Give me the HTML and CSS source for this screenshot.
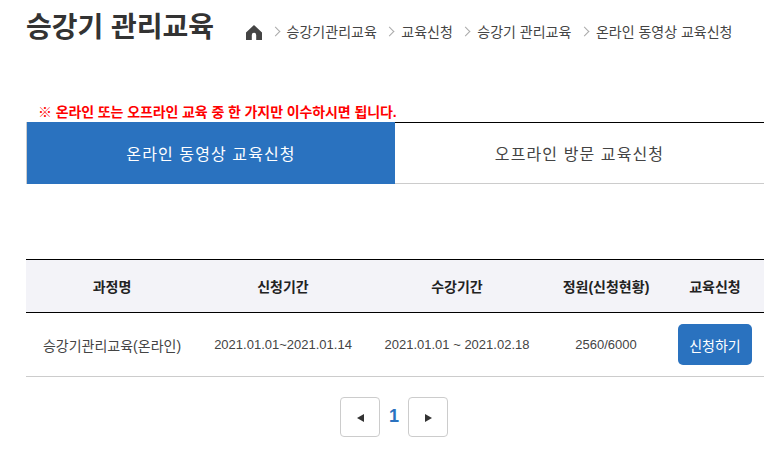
FILE: index.html
```html
<!DOCTYPE html>
<html lang="ko">
<head>
    <meta charset="UTF-8">
    <meta name="viewport" content="width=device-width, initial-scale=1.0">
    <title>온라인 동영상 교육신청</title>
    <link rel="stylesheet" href="styles.css">
</head>
<body>

<div class="page-head">
    <h1 class="page-title">승강기 관리교육</h1>
    <div class="crumbs">
        <svg class="home-icon" viewBox="0 0 16 15" width="16" height="15">
            <path d="M8 0 L16 7.6 V15 H10.2 V10 A2.2 2.2 0 0 0 5.8 10 V15 H0 V7.6 Z" fill="#444"/>
        </svg>
        <span class="crumb">승강기관리교육</span>
        <span class="crumb">교육신청</span>
        <span class="crumb">승강기 관리교육</span>
        <span class="crumb">온라인 동영상 교육신청</span>
    </div>
</div>

<p class="notice">※ 온라인 또는 오프라인 교육 중 한 가지만 이수하시면 됩니다.</p>

<div class="tabs">
    <a class="tab active">온라인 동영상 교육신청</a>
    <a class="tab">오프라인 방문 교육신청</a>
</div>

<table class="course-table">
    <thead>
        <tr>
            <th class="col-name">과정명</th>
            <th class="col-apply">신청기간</th>
            <th class="col-study">수강기간</th>
            <th class="col-seats">정원(신청현황)</th>
            <th>교육신청</th>
        </tr>
    </thead>
    <tbody>
        <tr>
            <td class="course-name">승강기관리교육(온라인)</td>
            <td>2021.01.01~2021.01.14</td>
            <td>2021.01.01 ~ 2021.02.18</td>
            <td>2560/6000</td>
            <td><button class="apply-btn">신청하기</button></td>
        </tr>
    </tbody>
</table>

<div class="pager">
    <a class="page-btn"><span class="arrow-left"></span></a>
    <span class="page-num">1</span>
    <a class="page-btn"><span class="arrow-right"></span></a>
</div>

</body>
</html>
```

FILE: styles.css
```css
* { box-sizing: border-box; }
body {
    font-family: "Liberation Sans", "Noto Sans CJK KR", sans-serif;
    margin: 0;
    padding: 0 13px 0 26px;
    color: #333;
    background: #fff;
}

/* title + breadcrumb */
.page-head {
    display: flex;
    align-items: flex-start;
    height: 104px;
    padding-top: 10px;
}
.page-title {
    margin: 0;
    font-size: 28px;
    line-height: 36px;
    font-weight: 700;
    color: #333;
    white-space: nowrap;
}
.crumbs {
    display: flex;
    align-items: center;
    margin-left: 32px;
    height: 20px;
    margin-top: 11px;
    font-size: 14px;
    color: #444;
    white-space: nowrap;
}
.home-icon { margin-top: 3px; }
.crumb {
    display: flex;
    align-items: center;
    margin-left: 9.5px;
}
.crumb::before {
    content: "";
    width: 6px;
    height: 6px;
    margin-right: 8px;
    border-top: 1.5px solid #aaa;
    border-right: 1.5px solid #aaa;
    transform: rotate(45deg);
}

.notice {
    margin: 0 0 0 12px;
    height: 18px;
    font-size: 14px;
    line-height: 16px;
    font-weight: 700;
    letter-spacing: -0.1px;
    color: #f00;
    white-space: nowrap;
}

/* tabs */
.tabs {
    display: flex;
    height: 62px;
    border-top: 1px solid #000;
    border-bottom: 1px solid #ccc;
}
.tab {
    flex: 0 0 369px;
    display: flex;
    align-items: center;
    justify-content: center;
    font-size: 16px;
    letter-spacing: 1.1px;
    color: #444;
}
.tab + .tab { flex: 1; }
.tab.active {
    background-color: #2a72bf;
    border-left: 1px solid #ccc;
    color: #fff;
    margin: -1px 0 -1px 0;
}

/* course table */
.course-table {
    width: 100%;
    margin-top: 75px;
    border-collapse: collapse;
    table-layout: fixed;
    font-size: 13px;
    text-align: center;
}
.course-table th {
    height: 53px;
    background-color: #f3f3f8;
    border-top: 1px solid #000;
    border-bottom: 1px solid #000;
    font-size: 14px;
    font-weight: 700;
    color: #222;
    padding: 0;
}
.course-table td {
    height: 64px;
    border-bottom: 1px solid #ccc;
    padding: 0;
    color: #444;
}
.course-table .course-name { font-size: 14px; }
.col-name { width: 172px; }
.col-apply { width: 170px; }
.col-study { width: 178px; }
.col-seats { width: 120px; }
.apply-btn {
    width: 74px;
    height: 41px;
    border: none;
    border-radius: 5px;
    background-color: #2a72bf;
    color: #fff;
    font: inherit;
    font-size: 14px;
    cursor: pointer;
}

/* pager */
.pager {
    display: flex;
    justify-content: center;
    align-items: center;
    margin-top: 20px;
    padding-right: 2px;
}
.page-btn {
    width: 40px;
    height: 40px;
    border: 1px solid #ccc;
    border-radius: 4px;
    display: flex;
    align-items: center;
    justify-content: center;
    padding-top: 2px;
}
.page-num {
    width: 28px;
    text-align: center;
    font-size: 18px;
    font-weight: 700;
    color: #2a72bf;
    margin-top: -2px;
}
.arrow-left, .arrow-right {
    width: 0;
    height: 0;
    border-top: 4px solid transparent;
    border-bottom: 4px solid transparent;
}
.arrow-left { border-right: 7px solid #333; }
.arrow-right { border-left: 7px solid #333; }
```
